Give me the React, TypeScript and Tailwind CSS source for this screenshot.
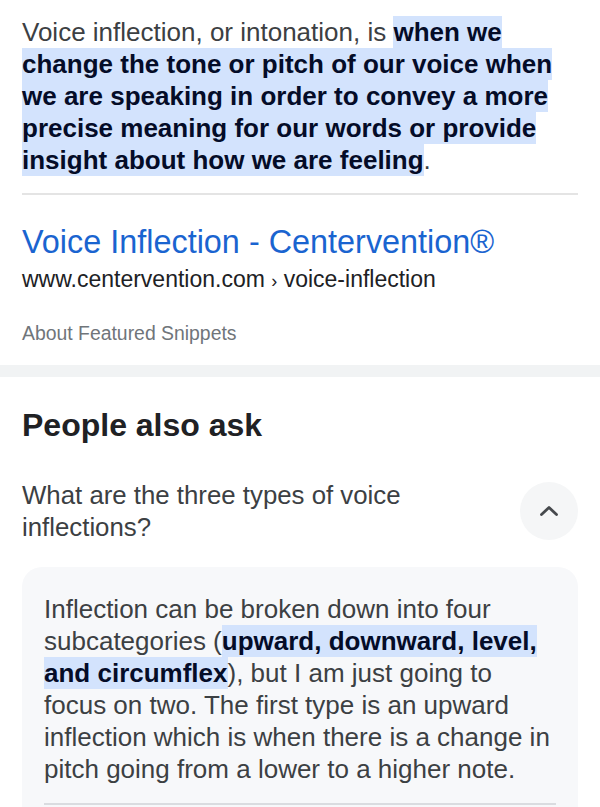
export default function App() {
  return (
    <div className="w-[600px] min-h-[807px] bg-white font-['Liberation_Sans',Arial,sans-serif] overflow-hidden">
      <div className="px-[22px] pt-[16px]">
        <p className="text-[26px] leading-[32px] text-[#3c4043]">
          Voice inflection, or intonation, is{" "}
          <span className="font-bold text-[#040c28] bg-[#d3e3fd] py-[1px]">
            when we change the tone or pitch of our voice when we are speaking in order to convey a more precise meaning for our words or provide insight about how we are feeling
          </span>
          .
        </p>
        <div className="mt-[17px] h-[2px] bg-[#e4e4e4]" />
        <div className="mt-[27px] text-[32.4px] leading-[40px] text-[#1a64d0]">Voice Inflection - Centervention®</div>
        <div className="mt-[4px] text-[23px] leading-[26px] text-[#202124]">
          www.centervention.com <span className="text-[18px]">›</span> voice-inflection
        </div>
        <div className="mt-[27px] text-[19.4px] leading-[24px] text-[#70757a]">About Featured Snippets</div>
      </div>
      <div className="mt-[20px] h-[12px] bg-[#f1f3f4]" />
      <div className="px-[22px] pt-[28px]">
        <h2 className="text-[32px] leading-[40px] font-bold text-[#202124]">People also ask</h2>
        <div className="mt-[34px] flex items-center gap-[12px]">
          <div className="flex-1 text-[25.8px] leading-[32px] text-[#3c4043]">
            What are the three types of voice inflections?
          </div>
          <div className="w-[58px] h-[58px] rounded-full bg-[#f5f6f7] flex items-center justify-center">
            <svg width="24" height="24" viewBox="0 0 24 24" fill="none">
              <path d="M4.5 15.5L12 8.5l7.5 7" stroke="#46494d" strokeWidth="2.8" strokeLinecap="round" strokeLinejoin="round" />
            </svg>
          </div>
        </div>
        <div className="mt-[24px] rounded-[20px] bg-[#f7f8fa] pl-[22px] pr-[18px] pt-[26px] pb-[40px]">
          <p className="text-[26px] leading-[32px] text-[#3c4043]">
            Inflection can be broken down into four subcategories (
            <span className="font-bold text-[#040c28] bg-[#d3e3fd] py-[1px]">upward, downward, level, and circumflex</span>
            ), but I am just going to focus on two. The first type is an upward inflection which is when there is a change in pitch going from a lower to a higher note.
          </p>
          <div className="mt-[18px] mr-[4px] h-[2px] bg-[#dadce0]" />
        </div>
      </div>
    </div>
  );
}
